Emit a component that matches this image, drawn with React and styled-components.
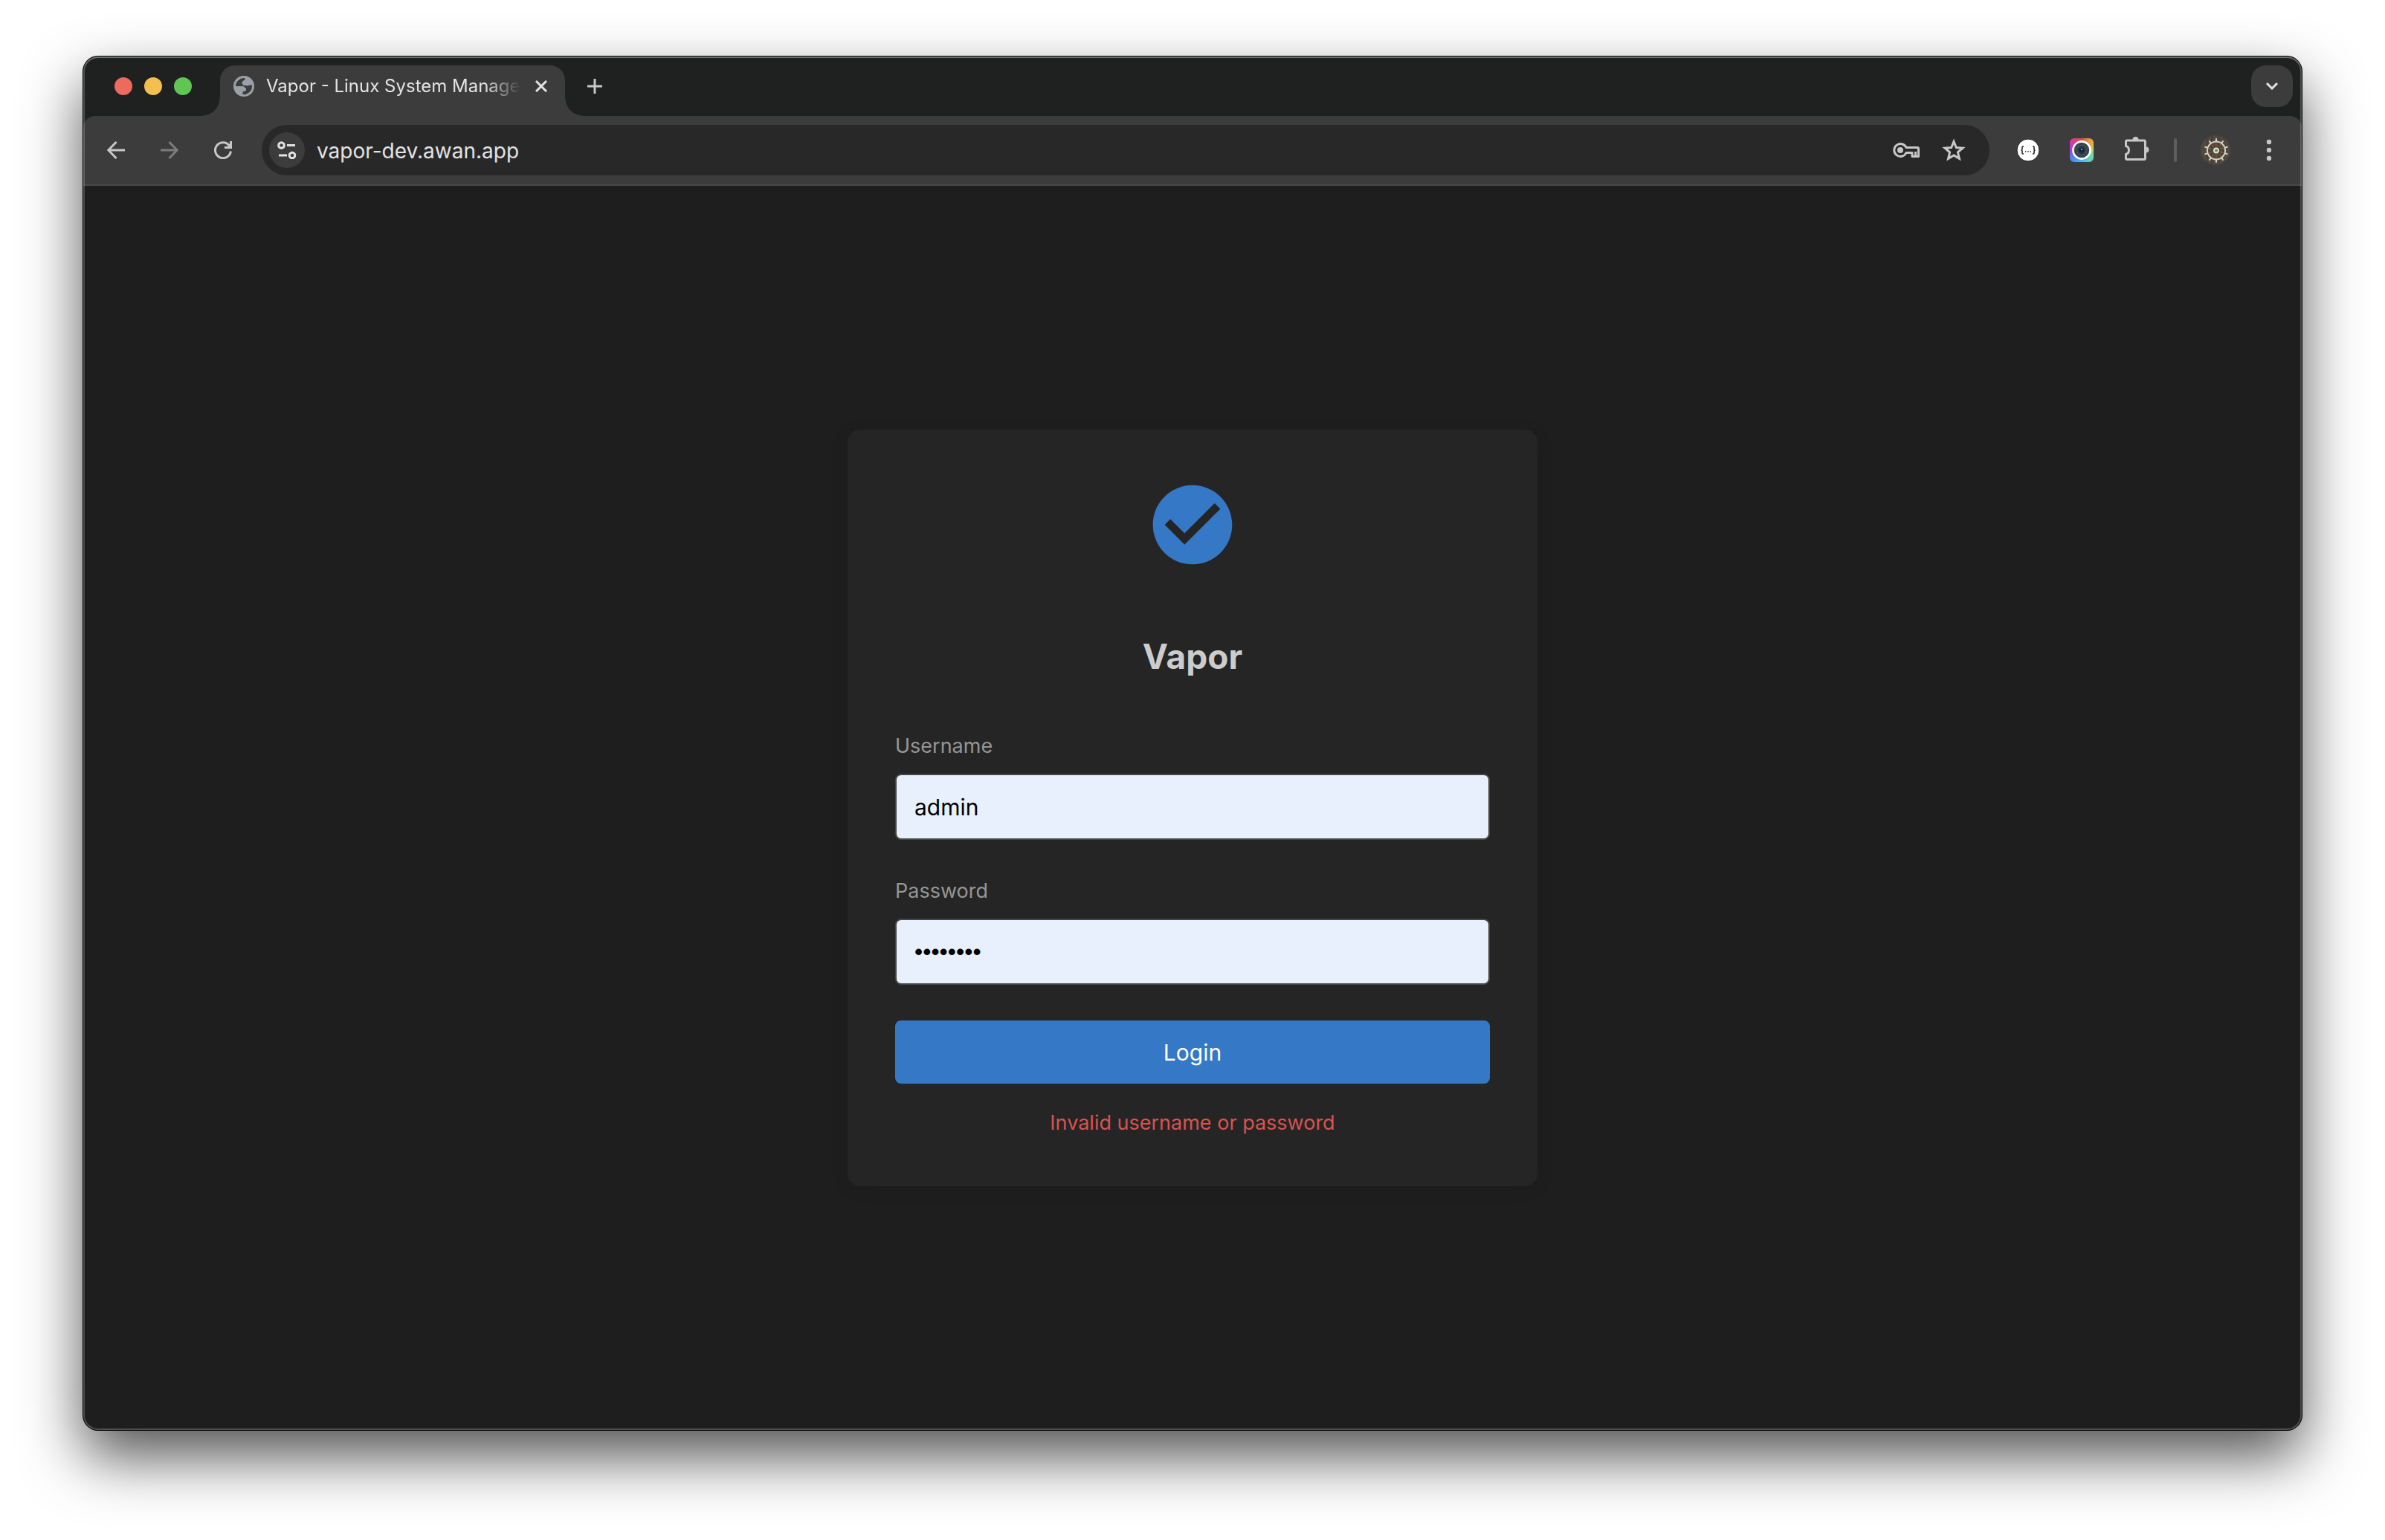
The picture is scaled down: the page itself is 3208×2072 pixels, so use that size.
import React from "react";
import styled, { createGlobalStyle } from "styled-components";

const ui = '"Inter", "Liberation Sans", sans-serif';

const GlobalStyle = createGlobalStyle`
  *, *::before, *::after { box-sizing: border-box; }
  body { margin: 0; background: #ffffff; font-family: ${ui}; }
  button, input { font-family: inherit; margin: 0; }
`;

const Desktop = styled.div`
  display: flex;
  min-height: 100vh;
  padding: 76px 112px 148px;
`;

const Window = styled.div`
  position: relative;
  display: flex;
  flex: 1;
  flex-direction: column;
  overflow: hidden;
  border-radius: 20px;
  background: #1f2120;
  box-shadow: 0 0 0 1px #000000, 0 36px 80px rgba(0, 0, 0, 0.68);

  &::after {
    content: "";
    position: absolute;
    inset: 0;
    border-radius: 20px;
    pointer-events: none;
    box-shadow: inset 0 2px 0 rgba(255, 255, 255, 0.18), inset 0 0 0 2px rgba(255, 255, 255, 0.22);
  }
`;

const TabStrip = styled.header`
  display: flex;
  align-items: flex-end;
  height: 80px;
  padding: 0 12px 0 42px;
`;

const TrafficLights = styled.div`
  display: flex;
  gap: 16px;
  align-self: center;
  margin-right: 38px;
`;

const Light = styled.button`
  width: 24px;
  height: 24px;
  padding: 0;
  border: 0;
  border-radius: 50%;
  background: ${(p) => p.$color};
`;

const Tab = styled.div`
  position: relative;
  display: flex;
  align-items: flex-start;
  width: 464px;
  height: 68px;
  padding: 12px 16px 0 18px;
  border-radius: 20px 20px 0 0;
  background: #3c3c3c;

  &::before,
  &::after {
    content: "";
    position: absolute;
    bottom: 0;
    width: 24px;
    height: 24px;
  }
  &::before {
    right: 100%;
    background: radial-gradient(circle at 0 0, transparent 23px, #3c3c3c 24px);
  }
  &::after {
    left: 100%;
    background: radial-gradient(circle at 100% 0, transparent 23px, #3c3c3c 24px);
  }
`;

const TabIcon = styled.span`
  display: flex;
  align-items: center;
  height: 32px;
`;

const TabTitle = styled.span`
  flex: 1;
  margin-left: 16px;
  overflow: hidden;
  white-space: nowrap;
  color: #e3e3e3;
  font-size: 24px;
  line-height: 32px;
  mask-image: linear-gradient(to right, #000 calc(100% - 60px), transparent calc(100% - 12px));
`;

const IconButton = styled.button`
  display: flex;
  align-items: center;
  justify-content: center;
  flex: none;
  width: ${(p) => p.$size || 32}px;
  height: ${(p) => p.$size || 32}px;
  padding: 0;
  border: 0;
  border-radius: ${(p) => p.$radius || 0}px;
  background: ${(p) => p.$bg || "transparent"};
  color: ${(p) => p.$color || "#c7c7c7"};
`;

const NewTab = styled(IconButton)`
  align-self: center;
  margin-left: 24px;
`;

const TabSearch = styled(IconButton)`
  align-self: center;
  margin-left: auto;
`;

const Toolbar = styled.nav`
  display: flex;
  align-items: center;
  height: 94px;
  padding: 0 24px 0 16px;
  border-bottom: 2px solid #4a4a4a;
  border-radius: 16px 16px 0 0;
  background: #3c3c3c;
`;

const NavButtons = styled.div`
  display: flex;
  gap: 16px;
  margin-right: 24px;
`;

const AddressBar = styled.div`
  display: flex;
  flex: 1;
  align-items: center;
  height: 68px;
  padding: 0 28px 0 10px;
  border-radius: 34px;
  background: #282828;
`;

const Url = styled.input`
  flex: 1;
  min-width: 0;
  height: 48px;
  padding: 2px 16px 0;
  border: 0;
  outline: 0;
  background: transparent;
  color: #e3e3e3;
  font-size: 28px;
`;

const AddressActions = styled.div`
  display: flex;
  gap: 24px;
`;

const Extensions = styled.div`
  display: flex;
  align-items: center;
  gap: 32px;
  margin-left: 32px;
`;

const Divider = styled.span`
  width: 4px;
  height: 32px;
  border-radius: 2px;
  background: #5e5e5e;
`;

const Page = styled.main`
  display: flex;
  flex: 1;
  align-items: center;
  justify-content: center;
  background: #1e1e1e;
`;

const Card = styled.form`
  display: flex;
  flex-direction: column;
  align-items: center;
  width: 928px;
  padding: 64px;
  border-radius: 16px;
  background: #252525;
  box-shadow: 0 4px 24px rgba(0, 0, 0, 0.08);
`;

const Title = styled.h1`
  margin: 77px 0 64px;
  color: #cccccc;
  font-size: 46px;
  line-height: 72px;
  font-weight: 700;
`;

const Field = styled.div`
  display: flex;
  flex-direction: column;
  gap: 16px;
  width: 100%;
  margin-bottom: 48px;
`;

const Label = styled.label`
  color: #969696;
  font-size: 27px;
  line-height: 42px;
`;

const TextBox = styled.input`
  height: 89px;
  padding: 0 24px;
  border: 2px solid #464646;
  border-radius: 8px;
  outline: 0;
  background: #e8f0fe;
  color: #000000;
  font-size: 30px;
`;

const PasswordBox = styled(TextBox)`
  font-family: "Liberation Sans", sans-serif;
  font-size: 32px;
`;

const LoginButton = styled.button`
  width: 100%;
  height: 85px;
  border: 0;
  border-radius: 8px;
  background: #3478c6;
  color: #ffffff;
  font-size: 30px;
`;

const ErrorText = styled.p`
  margin: 32px 0 0;
  color: #d9534f;
  font-size: 27px;
  line-height: 42px;
`;

const Stroke = ({ w, h, width = 3, children }) => (
  <svg width={w} height={h} viewBox={`0 0 ${w} ${h}`} fill="none" stroke="currentColor" strokeWidth={width} aria-hidden="true">
    {children}
  </svg>
);

const GlobeIcon = () => (
  <svg width="28" height="28" viewBox="0 0 28 28" aria-hidden="true">
    <circle cx="14" cy="14" r="14" fill="#9aa0a6" />
    <path d="M3 13.6A11 11 0 0 1 14.5 3.1C17 4 15.5 5.5 13.5 6.5Q11.5 7.5 11.5 9.5 11.5 11 13 12L14 14H3Z" fill="#3c3c3c" />
    <path d="M24.9 12.5A11 11 0 0 1 12.5 24.9V21.5L17 20V17L12.5 13.5Q15 11.8 18 13.6L22 12.5Z" fill="#3c3c3c" />
  </svg>
);

const BackIcon = () => (
  <Stroke w={24} h={24}>
    <path d="M24 12H2.5M12.5 1 1.8 12 12.5 23" />
  </Stroke>
);

const ForwardIcon = () => (
  <Stroke w={24} h={24}>
    <path d="M0 12H21.5M11.5 1 22.2 12 11.5 23" />
  </Stroke>
);

const ReloadIcon = () => (
  <Stroke w={24} h={24}>
    <path d="M22.4 13.5A10.5 10.5 0 1 1 20.5 6L22 8.5M22.5 0V8.5H14" />
  </Stroke>
);

const SettingsIcon = () => (
  <Stroke w={26} h={24}>
    <circle cx="5.5" cy="5.5" r="3.8" />
    <path d="M13 5.5H24M2 19H13" />
    <circle cx="20" cy="19" r="3.8" />
  </Stroke>
);

const KeyIcon = () => (
  <Stroke w={36} h={22}>
    <circle cx="10" cy="11" r="4" fill="currentColor" stroke="none" />
    <path d="M18 7.5A8.5 8.5 0 1 0 18 14.5H26V19.5H34.5V9Q34.5 7.5 33 7.5Z" strokeLinejoin="round" />
    <path d="M30.5 13V19" />
  </Stroke>
);

const StarIcon = () => (
  <Stroke w={32} h={32}>
    <path d="M16 4.5 19.3 12.5 28 13.2 21.4 18.9 23.4 27.4 16 22.9 8.6 27.4 10.6 18.9 4 13.2 12.7 12.5Z" />
  </Stroke>
);

const BracesIcon = () => (
  <svg width="32" height="32" viewBox="0 0 32 32" aria-hidden="true">
    <circle cx="16" cy="16" r="15" fill="#ffffff" stroke="#1c1c1c" strokeWidth="1" />
    <path
      d="M10 11H9Q8 11 8 12V14.5Q8 16 6.5 16 8 16 8 17.5V20Q8 21 9 21H10M22 11H23Q24 11 24 12V14.5Q24 16 25.5 16 24 16 24 17.5V20Q24 21 23 21H22"
      fill="none"
      stroke="#222222"
      strokeWidth="1.6"
    />
    <path d="M12 18H13.4M15.3 18H16.7M18.6 18H20" stroke="#222222" strokeWidth="1.4" />
  </svg>
);

const Rainbow = styled.span`
  display: flex;
  width: 32px;
  height: 32px;
  border-radius: 6px;
  background: conic-gradient(from 0deg, #dc4a32, #eea53a 45deg, #a8d870 90deg, #5cd6c0 135deg, #52b6ea 180deg, #4a8cf0 225deg, #a03cf0 270deg, #e0389c 315deg, #dc4a32);
`;

const CameraIcon = () => (
  <Rainbow>
    <svg width="32" height="32" viewBox="0 0 32 32" aria-hidden="true">
      <circle cx="16" cy="16" r="11.6" fill="#3b434c" stroke="#ffffff" strokeWidth="2.6" />
      <circle cx="16" cy="16" r="6.5" fill="#2b3947" stroke="#4a5560" strokeWidth="1.2" />
      <circle cx="16" cy="16" r="3.4" fill="#13283d" />
      <path d="M15 14H17V16H15Z" fill="#5aa0cf" />
    </svg>
  </Rainbow>
);

const PuzzleIcon = () => (
  <Stroke w={38} h={38}>
    <g transform="translate(4 0)">
      <path
        d="M4 6H27Q28.5 6 28.5 7.5V30Q28.5 31.5 27 31.5H4Q2.5 31.5 2.5 30V24.5Q6.5 23.5 6.5 19T2.5 13.5V7.5Q2.5 6 4 6Z"
        strokeLinejoin="round"
      />
      <path d="M11.5 5A4 4 0 0 1 19.5 5ZM29.5 14.5A4 4 0 0 1 29.5 22.5Z" fill="currentColor" stroke="none" />
    </g>
  </Stroke>
);

const spokes = [0, 36, 72, 108, 144, 180, 216, 252, 288, 324];

const AvatarIcon = () => (
  <svg width="40" height="40" viewBox="0 0 40 40" aria-hidden="true">
    <circle cx="20" cy="20" r="20" fill="#51483f" />
    <path d="M9 3.5V36.5M15 1V39M25 1V39M31 3.5V36.5" stroke="#3d362f" strokeWidth="1" />
    <circle cx="21" cy="20.5" r="12" fill="none" stroke="#d6d0c6" strokeWidth="2" />
    {spokes.map((a) => (
      <g key={a} transform={`rotate(${a} 21 20.5)`}>
        <path d="M21 8V5" stroke="#d6d0c6" strokeWidth="2" strokeLinecap="round" />
        <path d="M21 15V10" stroke="#8a5f2e" strokeWidth="1" />
      </g>
    ))}
    <circle cx="21" cy="20.5" r="3" fill="#6f8a5c" stroke="#e4dfd6" strokeWidth="2" />
  </svg>
);

const MenuIcon = () => (
  <svg width="32" height="32" viewBox="0 0 32 32" fill="currentColor" aria-hidden="true">
    <circle cx="16" cy="5" r="3.2" />
    <circle cx="16" cy="16" r="3.2" />
    <circle cx="16" cy="27" r="3.2" />
  </svg>
);

const CheckBadge = () => (
  <svg width="128" height="128" viewBox="0 0 24 24" fill="#3478c6" aria-hidden="true">
    <path d="M12 2C6.48 2 2 6.48 2 12s4.48 10 10 10 10-4.48 10-10S17.52 2 12 2zm-2 15l-5-5 1.41-1.41L10 14.17l7.59-7.59L19 8l-9 9z" />
  </svg>
);

export default function App() {
  return (
    <Desktop>
      <GlobalStyle />
      <Window>
        <TabStrip>
          <TrafficLights>
            <Light $color="#ed6a5e" aria-label="Close window" />
            <Light $color="#f5bf4f" aria-label="Minimize window" />
            <Light $color="#61c554" aria-label="Zoom window" />
          </TrafficLights>
          <Tab>
            <TabIcon>
              <GlobeIcon />
            </TabIcon>
            <TabTitle>Vapor - Linux System Manage</TabTitle>
            <IconButton $color="#e3e3e3" aria-label="Close tab">
              <Stroke w={16} h={16}>
                <path d="M1 1 15 15M15 1 1 15" />
              </Stroke>
            </IconButton>
          </Tab>
          <NewTab aria-label="New tab">
            <Stroke w={20} h={20}>
              <path d="M10 0V20M0 10H20" />
            </Stroke>
          </NewTab>
          <TabSearch $size={56} $radius={20} $bg="#3c3c3c" $color="#e3e3e3" aria-label="Search tabs">
            <Stroke w={16} h={10}>
              <path d="M1 1 8 8 15 1" />
            </Stroke>
          </TabSearch>
        </TabStrip>
        <Toolbar aria-label="Browser toolbar">
          <NavButtons>
            <IconButton $size={56} aria-label="Back">
              <BackIcon />
            </IconButton>
            <IconButton $size={56} $color="#7d7d7d" aria-label="Forward">
              <ForwardIcon />
            </IconButton>
            <IconButton $size={56} aria-label="Reload">
              <ReloadIcon />
            </IconButton>
          </NavButtons>
          <AddressBar>
            <IconButton $size={48} $radius={24} $bg="#3c3c3c" $color="#e3e3e3" aria-label="Site information">
              <SettingsIcon />
            </IconButton>
            <Url aria-label="Address" defaultValue="vapor-dev.awan.app" />
            <AddressActions>
              <IconButton $size={40} aria-label="Manage passwords">
                <KeyIcon />
              </IconButton>
              <IconButton $size={40} aria-label="Bookmark this tab">
                <StarIcon />
              </IconButton>
            </AddressActions>
          </AddressBar>
          <Extensions>
            <IconButton $size={40} aria-label="JSON viewer">
              <BracesIcon />
            </IconButton>
            <IconButton $size={40} aria-label="Screen capture">
              <CameraIcon />
            </IconButton>
            <IconButton $size={40} aria-label="Extensions">
              <PuzzleIcon />
            </IconButton>
            <Divider />
            <IconButton $size={40} aria-label="Profile">
              <AvatarIcon />
            </IconButton>
            <IconButton $size={40} aria-label="Menu">
              <MenuIcon />
            </IconButton>
          </Extensions>
        </Toolbar>
        <Page>
          <Card onSubmit={(e) => e.preventDefault()}>
            <CheckBadge />
            <Title>Vapor</Title>
            <Field>
              <Label htmlFor="username">Username</Label>
              <TextBox id="username" type="text" defaultValue="admin" />
            </Field>
            <Field>
              <Label htmlFor="password">Password</Label>
              <PasswordBox id="password" type="password" defaultValue="password" />
            </Field>
            <LoginButton type="submit">Login</LoginButton>
            <ErrorText role="alert">Invalid username or password</ErrorText>
          </Card>
        </Page>
      </Window>
    </Desktop>
  );
}
